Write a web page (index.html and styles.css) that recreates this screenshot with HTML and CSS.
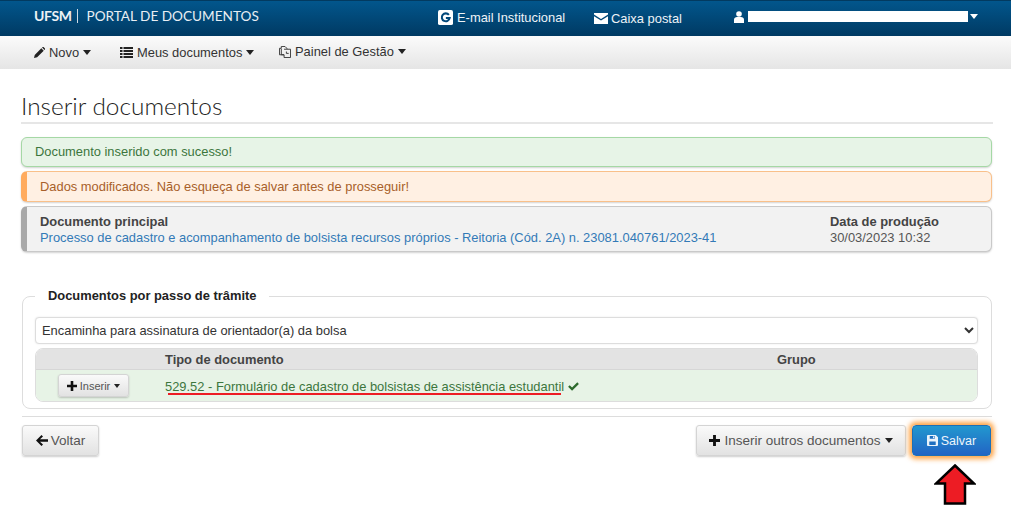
FILE: index.html
```html
<!DOCTYPE html>
<html lang="pt">
<head>
<meta charset="utf-8">
<title>Inserir documentos</title>
<link rel="stylesheet" href="styles.css">
</head>
<body>
<div class="page">
  <header class="topbar">
    <div class="brand"><b>UFSM</b><span class="brand-sep"></span><span>PORTAL DE DOCUMENTOS</span></div>
    <div class="top-links">
      <a class="top-link mail-g"><svg class="ico-g" viewBox="0 0 16 16"><rect width="16" height="16" rx="2" fill="#fff"/><path d="M11.600 5.200A4.200 4.200 0 1 0 12.400 8.600H8.400" fill="none" stroke="#02487a" stroke-width="2.200"/></svg>E-mail Institucional</a>
      <a class="top-link caixa"><svg class="ico-env" viewBox="0 0 14 11"><path d="M0 0h14v1.600L7 6 0 1.600z M0 3.200 7 7.600l7-4.400V11H0z" fill="#fff"/></svg>Caixa postal</a>
      <a class="top-link user"><svg class="ico-user" viewBox="0 0 10 12"><circle cx="5" cy="3" r="2.800" fill="#fff"/><path d="M0 12V8.600C0 7 1.500 6 3 6h4c1.500 0 3 1 3 2.600V12z" fill="#fff"/></svg><span class="redact"></span><i class="caret caret-white"></i></a>
    </div>
  </header>
  <nav class="menu">
    <a class="menu-item m-novo"><svg class="ico" viewBox="0 0 12 12"><path d="M0 12l.8-3.400L8 1.400l2.600 2.600-7.200 7.200z M8.800.6 9.400 0c.4-.2.800-.2 1 0l1.600 1.600c.2.300.2.700 0 1l-.6.600z" fill="#222"/></svg>Novo<i class="caret"></i></a>
    <a class="menu-item m-docs"><svg class="ico" viewBox="0 0 13 11"><path d="M0 0h2.500v2H0zM3.500 0H13v2H3.500zM0 3h2.500v2H0zM3.500 3H13v2H3.500zM0 6h2.500v2H0zM3.500 6H13v2H3.500zM0 9h2.500v2H0zM3.500 9H13v2H3.500z" fill="#222"/></svg>Meus documentos<i class="caret"></i></a>
    <a class="menu-item m-painel"><svg class="ico ico-copy" viewBox="0 0 13 13"><path d="M.5 9.500V2.500h2V.5h4l2 2v1h4v9h-7v-3z M2.500 3v6.500h3M5.500 3.500h3M8 6v2h2.500" fill="none" stroke="#333" stroke-width="1"/></svg>Painel de Gestão<i class="caret"></i></a>
  </nav>
  <main class="content">
    <h1 class="title">Inserir documentos</h1>
    <div class="alert alert-ok">Documento inserido com sucesso!</div>
    <div class="alert alert-warn">Dados modificados. Não esqueça de salvar antes de prosseguir!</div>
    <div class="alert alert-doc">
      <div class="doc-main">
        <strong>Documento principal</strong>
        <a class="doc-link">Processo de cadastro e acompanhamento de bolsista recursos próprios - Reitoria (Cód. 2A) n. 23081.040761/2023-41</a>
      </div>
      <div class="doc-date">
        <strong>Data de produção</strong>
        <span>30/03/2023 10:32</span>
      </div>
    </div>
    <fieldset class="steps">
      <legend>Documentos por passo de trâmite</legend>
      <select class="step-select"><option>Encaminha para assinatura de orientador(a) da bolsa</option></select>
      <div class="doc-table">
        <div class="row row-head">
          <span class="c-act"></span>
          <span class="c-type">Tipo de documento</span>
          <span class="c-group">Grupo</span>
        </div>
        <div class="row row-body">
          <span class="c-act"><button class="btn btn-small"><svg class="ico-plus" viewBox="0 0 10 10"><path d="M3.700 0h2.600v3.700H10v2.600H6.300V10H3.700V6.300H0V3.700h3.700z" fill="#111"/></svg>Inserir<i class="caret caret-small"></i></button></span>
          <span class="c-type c-type-val">529.52 - Formulário de cadastro de bolsistas de assistência estudantil<svg class="ico-check" viewBox="0 0 12 10"><path d="M0 5.400 1.800 3.600 4.400 6.200 10.200 .4 12 2.200 4.400 9.800z" fill="#2d6a2d"/></svg></span>
          <span class="c-group"></span>
        </div>
        <span class="underline"></span>
      </div>
    </fieldset>
    <hr class="rule">
    <div class="actions">
      <button class="btn btn-back"><svg class="ico-back" viewBox="0 0 12 11"><path d="M5.500 0 7 1.500 4 4.200h8v2.600H4L7 9.500 5.500 11 0 5.500z" fill="#111"/></svg>Voltar</button>
      <div class="actions-right">
        <button class="btn btn-more"><svg class="ico-plus ico-plus-lg" viewBox="0 0 10 10"><path d="M3.700 0h2.600v3.700H10v2.600H6.300V10H3.700V6.300H0V3.700h3.700z" fill="#111"/></svg>Inserir outros documentos<i class="caret"></i></button>
        <button class="btn btn-save"><svg class="ico-save" viewBox="0 0 12 12"><path d="M0 1a1 1 0 0 1 1-1h8.500L12 2.500V11a1 1 0 0 1-1 1H1a1 1 0 0 1-1-1z" fill="#eaf3fb"/><path d="M3 1h5.500v3H3zM2.500 7h7v4h-7z" fill="#1f6fc0"/><path d="M6.500 1.500h1.500v2H6.500z" fill="#eaf3fb"/></svg>Salvar</button>
        <svg class="arrow" viewBox="0 0 42 42"><path d="M21 1.500 40 19.500H31V39.500H11V19.500H2z" fill="#ed1c24" stroke="#000" stroke-width="2.500"/></svg>
      </div>
    </div>
  </main>
</div>
</body>
</html>
```
FILE: styles.css
```css
* { box-sizing: border-box; }
html, body { margin: 0; padding: 0; background: #fff; }
body { font-family: "Liberation Sans", Arial, sans-serif; font-size: 12.9px; color: #333; height: 519px; overflow: hidden; }
.page { width: 1011px; }

.topbar {
  height: 36px;
  display: flex;
  align-items: center;
  justify-content: space-between;
  padding: 0 0 0 34px;
  background: linear-gradient(#02568c, #003a63);
  border-top: 1px solid #023a60;
  color: #fff;
}
.brand { display: flex; align-items: center; font-family: Lato, sans-serif; font-size: 13.6px; color: #e8eef3; margin-top: -6px; }
.brand b { font-weight: 700; font-size: 14px; color: #eef2f5; letter-spacing: -.4px; }
.brand-sep { width: 1px; height: 14px; background: #cfdbe5; margin: 0 9px 0 5px; }
.top-links { display: flex; align-items: center; }
.top-link { display: flex; align-items: center; color: #eef3f7; font-size: 12.9px; }
.mail-g { width: 156px; margin-top: -2px; }
.caixa { width: 140px; }
.user { width: 277px; margin-top: -4px; }
.ico-g { width: 15px; height: 15px; margin-right: 4px; }
.ico-env { width: 14px; height: 11px; margin-right: 3px; }
.ico-user { width: 10px; height: 12px; margin-right: 4px; }
.redact { width: 220px; height: 11px; background: #fff; }

.caret { display: inline-block; width: 0; height: 0; border-left: 4.500px solid transparent; border-right: 4.500px solid transparent; border-top: 5px solid #222; margin-left: 4px; vertical-align: 2px; }
.caret-white { border-top-color: #fff; margin-left: 2px; }
.caret-small { border-left-width: 3.500px; border-right-width: 3.500px; border-top-width: 4px; margin-left: 4px; }

.menu {
  height: 33px;
  display: flex;
  align-items: center;
  padding-left: 34px;
  background: linear-gradient(#fbfbfb, #e5e5e5);
  color: #333;
  font-size: 12.9px;
}
.menu-item { display: flex; align-items: center; }
.menu-item .caret { margin-top: -1px; }
.m-novo { width: 86px; }
.m-docs { width: 159px; }
.m-painel { margin-top: -2px; }
.ico { width: 11px; height: 11px; margin-right: 4px; }
.m-docs .ico { width: 13px; margin-right: 4px; }
.ico-copy { width: 12px; height: 12px; }

.content { padding: 0 19px 0 22px; }
.title {
  margin: 0 -1px 0 -1px;
  padding: 24px 0 3px;
  height: 55px;
  font-family: Lato, sans-serif;
  font-weight: 300;
  font-size: 24.400px;
  line-height: 26px;
  color: #222;
  border-bottom: 2px solid #e6e6e6;
}
.alert { border-radius: 6px; border: 1px solid; font-size: 12.9px; box-shadow: 0 1px 2px rgba(0,0,0,.18); }
.alert-ok { margin: 13px 0 0 -1px; height: 30px; line-height: 28px; padding-left: 13px; background: #e7f4e7; border-color: #a5d8a5; color: #3c763d; }
.alert-warn { margin: 4px 0 0 -1px; height: 31px; line-height: 30px; padding-left: 13px; background: #fff0e3; border-color: #f9c08a; border-left: 6px solid #ffab5e; color: #a8602a; }
.alert-doc { margin: 4px 0 0 -1px; height: 46px; padding: 7px 0 0 13px; display: flex; background: #f2f2f2; border-color: #c9c9c9; border-left: 6px solid #a9a9a9; line-height: 16px; }
.alert-doc strong { display: block; color: #444; }
.doc-main { width: 790px; }
.doc-date { color: #555; }
.doc-link { color: #337ab7; }

.steps { margin: 37px 0 0; padding: 0 13px 6px 12px; height: 120px; border: 1px solid #ddd; border-radius: 8px; min-width: 0; }
.steps legend { margin-left: 0; padding: 0 13px 0 13px; font-weight: 700; color: #222; font-size: 12.9px; line-height: 14px; }
.step-select { display: block; width: 100%; height: 27px; margin-top: 14px; padding: 0 2px; background: #fff; border: 1px solid #ddd; border-radius: 4px; font-family: "Liberation Sans", Arial, sans-serif; font-size: 12.9px; color: #333; box-shadow: 0 0 2px rgba(0,0,0,.1); }
.doc-table { position: relative; margin-top: 4px; height: 54px; border-radius: 8px; overflow: hidden; border: 1px solid #ddd; }
.row { display: flex; align-items: center; }
.row-head { height: 21px; background: #e3e3e3; font-weight: 700; color: #444; font-size: 12.9px; border-bottom: 1px solid #d6d6d6; }
.row-body { height: 31px; background: #e7f3e6; }
.c-act { width: 129px; padding-left: 22px; display: flex; }
.c-type { width: 612px; }
.c-type-val { color: #3c763d; display: flex; align-items: center; padding-top: 1px; }
.c-group { flex: 1; }
.underline { position: absolute; left: 132px; top: 44px; width: 393px; height: 2px; background: #ed1c24; }
.ico-check { width: 11px; height: 9px; margin-left: 4px; }

.btn { display: inline-flex; align-items: center; justify-content: center; border: 1px solid #d4d4d4; border-radius: 3px; background: linear-gradient(#fafafa, #e2e2e2); color: #555; font-family: "Liberation Sans", Arial, sans-serif; font-size: 13.5px; padding: 0; box-shadow: 0 1px 2px rgba(0,0,0,.2); }
.btn-small { width: 71px; height: 23px; font-size: 11px; }
.ico-plus { width: 10px; height: 10px; margin-right: 3px; }
.ico-plus-lg { width: 11px; height: 11px; margin-right: 4px; }
.rule { margin: 7px 0 0; border: 0; border-top: 1px solid #ddd; height: 0; }
.actions { display: flex; justify-content: space-between; margin-top: 8px; }
.btn-back { width: 77px; height: 31px; }
.ico-back { width: 12px; height: 11px; margin-right: 3px; }
.actions-right { display: flex; gap: 6px; position: relative; margin-right: 1px; }
.btn-more { width: 210px; height: 31px; }
.btn-save { width: 79px; height: 31px; background: linear-gradient(#2298cf, #2264c4); border: 1px solid #1d6fb5; color: #eef5fb; font-size: 12.5px; box-shadow: 0 0 5px 3px rgba(255,140,20,.8); border-radius: 4px; }
.ico-save { width: 11px; height: 11px; margin-right: 3px; }
.arrow { position: absolute; right: 15px; top: 39px; width: 42px; height: 42px; }
```
